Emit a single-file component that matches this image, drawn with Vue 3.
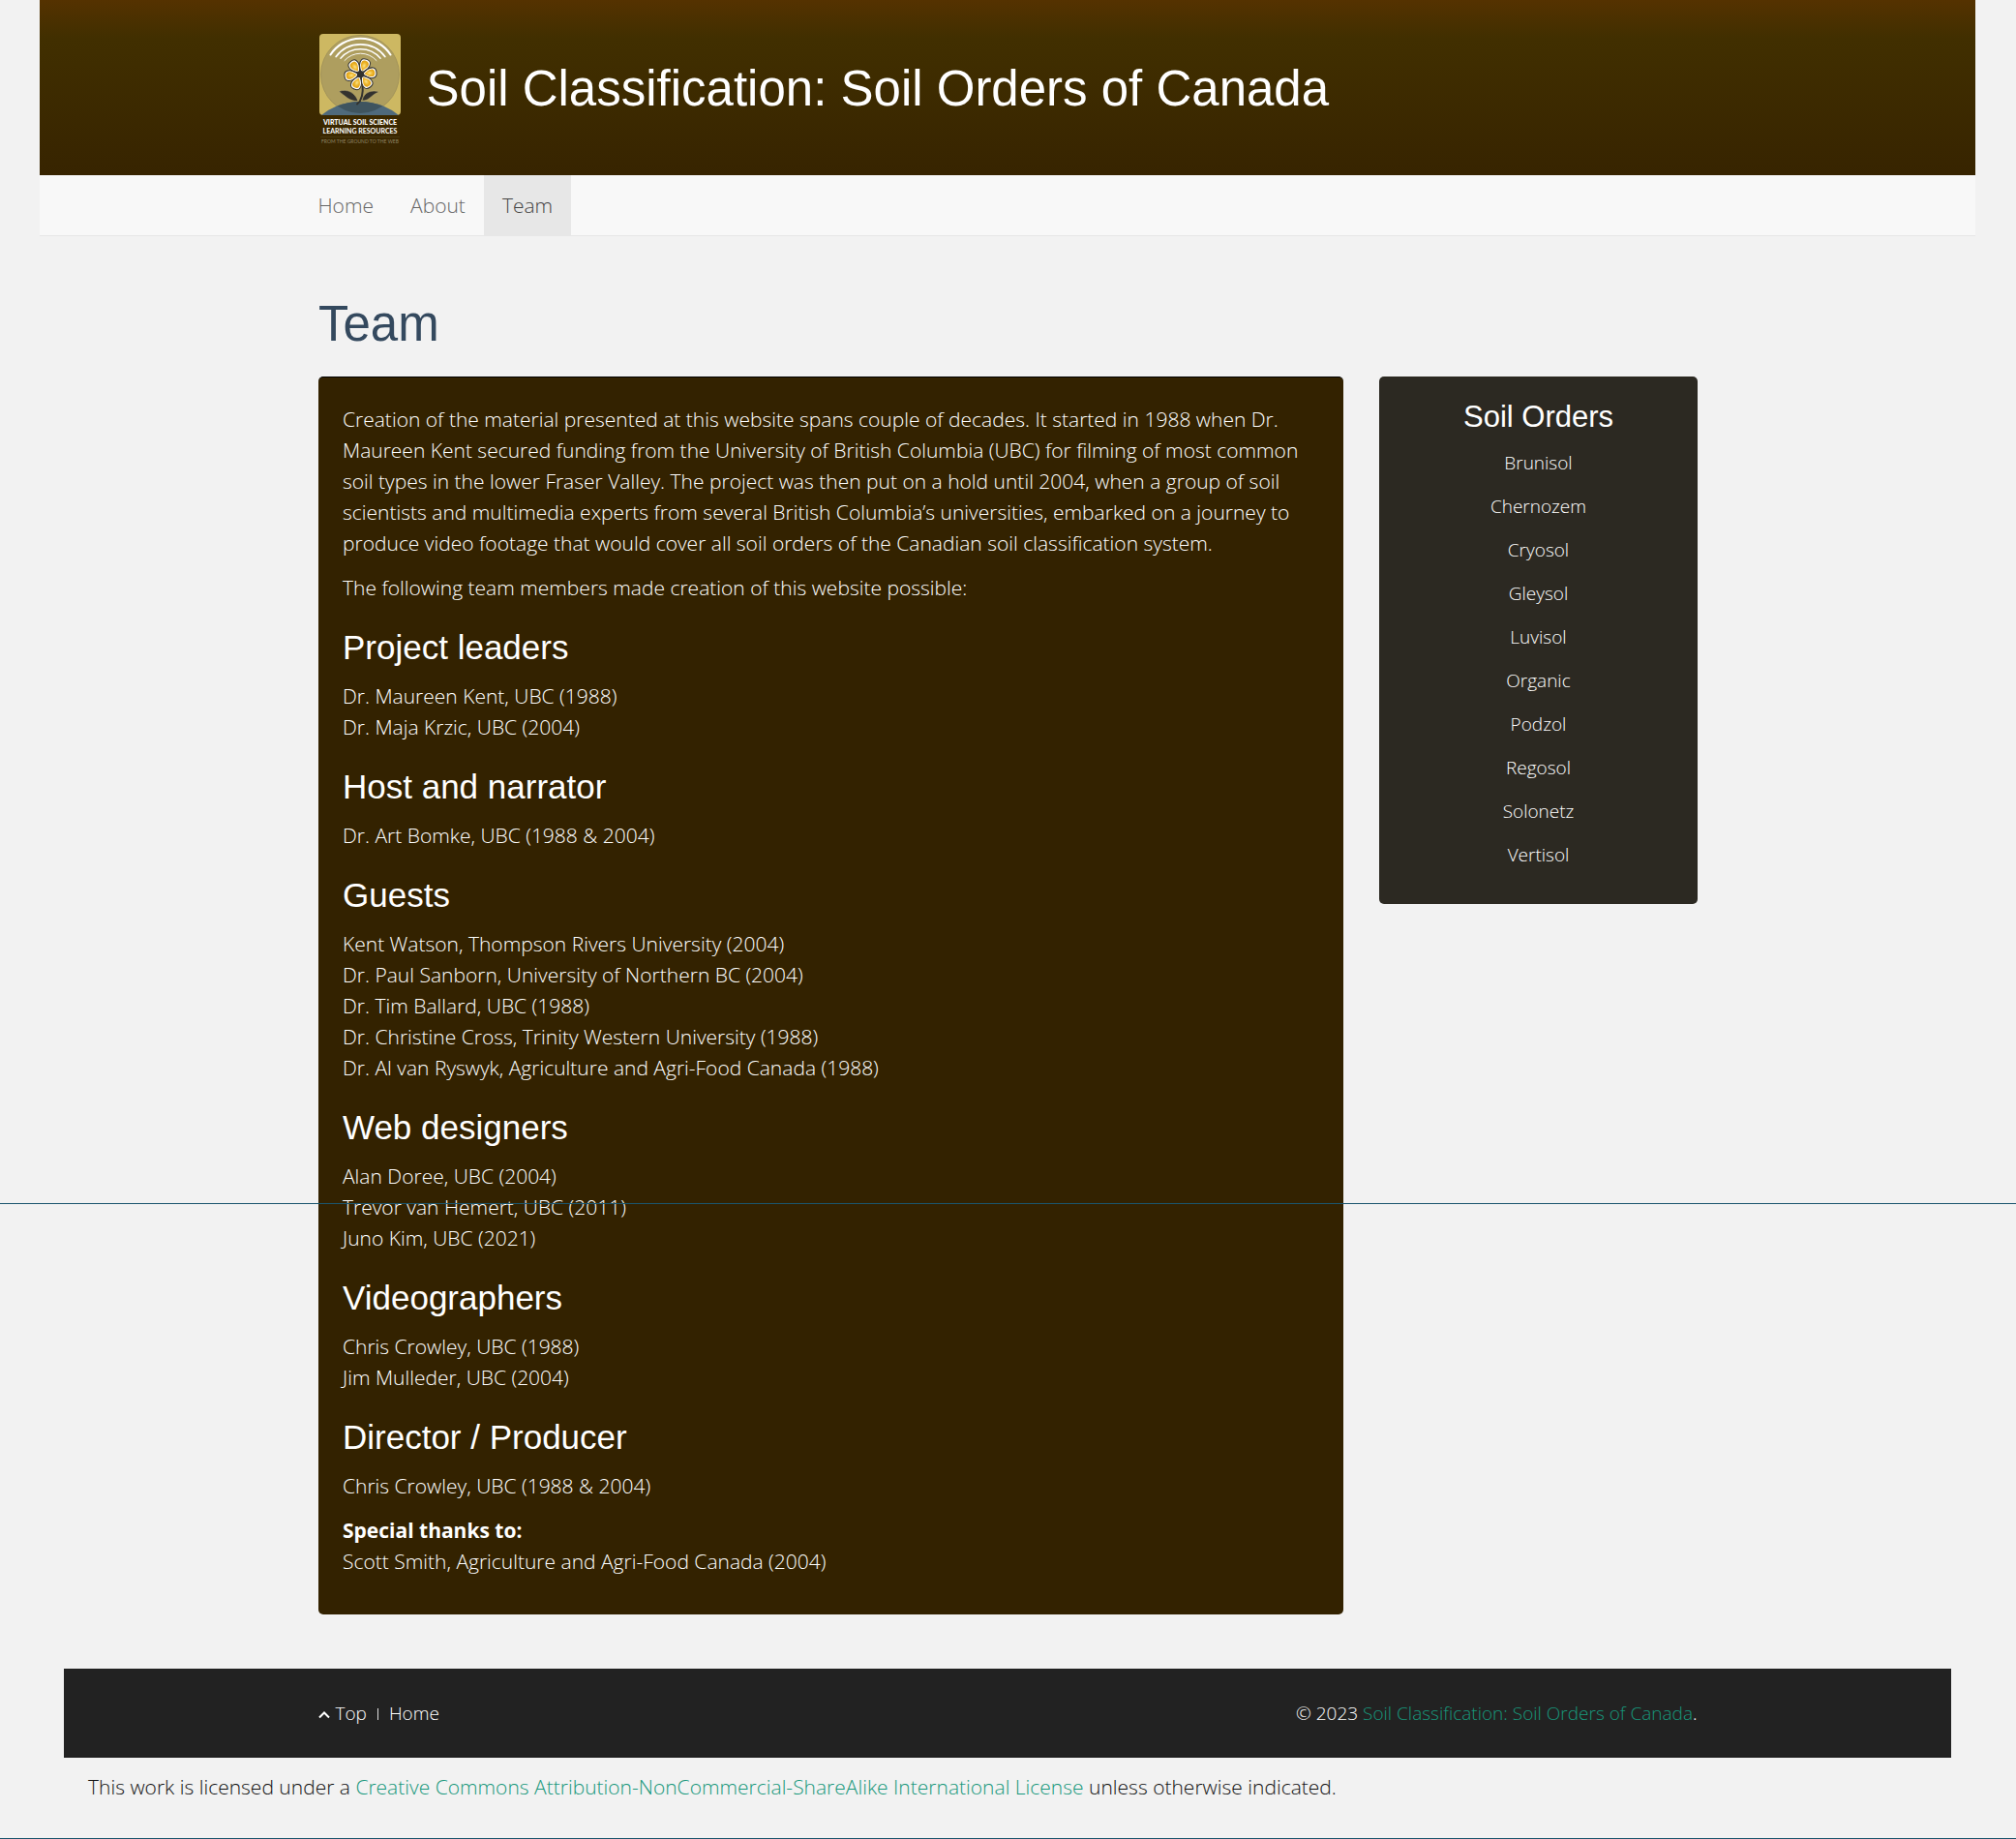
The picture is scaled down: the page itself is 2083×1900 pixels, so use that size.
<script setup>
const nav = [
  { label: 'Home', active: false },
  { label: 'About', active: false },
  { label: 'Team', active: true },
]

const groups = [
  { title: 'Project leaders', people: ['Dr. Maureen Kent, UBC (1988)', 'Dr. Maja Krzic, UBC (2004)'] },
  { title: 'Host and narrator', people: ['Dr. Art Bomke, UBC (1988 & 2004)'] },
  {
    title: 'Guests',
    people: [
      'Kent Watson, Thompson Rivers University (2004)',
      'Dr. Paul Sanborn, University of Northern BC (2004)',
      'Dr. Tim Ballard, UBC (1988)',
      'Dr. Christine Cross, Trinity Western University (1988)',
      'Dr. Al van Ryswyk, Agriculture and Agri-Food Canada (1988)',
    ],
  },
  { title: 'Web designers', people: ['Alan Doree, UBC (2004)', 'Trevor van Hemert, UBC (2011)', 'Juno Kim, UBC (2021)'] },
  { title: 'Videographers', people: ['Chris Crowley, UBC (1988)', 'Jim Mulleder, UBC (2004)'] },
  { title: 'Director / Producer', people: ['Chris Crowley, UBC (1988 & 2004)'] },
]

const orders = ['Brunisol', 'Chernozem', 'Cryosol', 'Gleysol', 'Luvisol', 'Organic', 'Podzol', 'Regosol', 'Solonetz', 'Vertisol']

const petals = [23, 83, 143, 203, 263, 323]
</script>

<template>
  <div id="top" class="page">
    <header class="banner">
      <div class="container brand">
        <svg class="logo" viewBox="0 0 85 114" role="img" aria-label="Virtual Soil Science Learning Resources">
          <defs>
            <radialGradient id="gold" cx="50%" cy="50%" r="60%">
              <stop offset="0" stop-color="#fbe48a" />
              <stop offset="0.5" stop-color="#eeb52a" />
              <stop offset="1" stop-color="#d99a10" />
            </radialGradient>
            <clipPath id="card"><rect x="0" y="0" width="84" height="84" rx="4" /></clipPath>
            <clipPath id="disc"><circle cx="42" cy="42" r="40" /></clipPath>
          </defs>
          <g clip-path="url(#card)">
            <rect width="84" height="84" fill="#cdb862" />
            <circle cx="42" cy="42" r="40.5" fill="#ae9e5f" stroke="#a3945a" stroke-width="1" />
            <circle cx="42" cy="134" r="64" fill="#4f6a7c" />
            <circle cx="42" cy="134" r="64" fill="#3f545f" clip-path="url(#disc)" />
          </g>
          <g fill="none" stroke="#fff" stroke-linecap="round">
            <path d="M11.5 21.5A37 37 0 0 1 73.5 21.5" stroke-width="2.1" />
            <path d="M17.2 23.5A31.7 31.7 0 0 1 67.8 23.5" stroke-width="1.8" />
            <path d="M21.9 25.3A27 27 0 0 1 63.1 25.3" stroke-width="1.4" />
            <path d="M26 27.5A22 22 0 0 1 59 27.5" stroke-width="0.9" />
          </g>
          <path d="M44.6 52C45.4 62 44 69 39 72.5" fill="none" stroke="#33322e" stroke-width="2" stroke-linecap="round" />
          <path d="M20 59.5C29 56 37 61 40 69.5C31 70 27 64 20 59.5Z" fill="#33322e" stroke="#c4b476" stroke-width="0.5" />
          <path d="M62 60C55 57.5 46 59.5 44 69C52 69.5 54 62 62 60Z" fill="#33322e" stroke="#c4b476" stroke-width="0.5" />
          <g transform="translate(42.5 41.7)">
            <g v-for="a in petals" :key="a" :transform="`rotate(${a})`">
              <path d="M0 -2C-3 -5 -6.4 -10 -5 -14C-4 -17.5 4 -17.5 5 -14C6.4 -10 3 -5 0 -2Z" fill="#fff" stroke="#33322e" stroke-width="1" />
              <path d="M0 -4C-2 -6.5 -4.6 -10 -3.6 -13C-2.8 -15.6 2.8 -15.6 3.6 -13C4.6 -10 2 -6.5 0 -4Z" fill="url(#gold)" />
            </g>
            <circle r="3.6" fill="#33322e" />
          </g>
          <text class="mark-title" x="42" y="94" text-anchor="middle">VIRTUAL SOIL SCIENCE</text>
          <text class="mark-sub" x="42" y="103" text-anchor="middle">LEARNING RESOURCES</text>
          <path d="M1 106.5H83" stroke="#55481f" stroke-width="0.5" />
          <text class="mark-tag" x="42" y="113" text-anchor="middle">FROM THE GROUND TO THE WEB</text>
        </svg>
        <h1>Soil Classification: Soil Orders of Canada</h1>
      </div>
    </header>

    <nav class="navbar">
      <ul class="container">
        <li v-for="n in nav" :key="n.label">
          <a href="#" :class="{ active: n.active }">{{ n.label }}</a>
        </li>
      </ul>
    </nav>

    <main class="container">
      <h1 class="page-title">Team</h1>
      <div class="columns">
        <article class="card">
          <p>
            Creation of the material presented at this website spans couple of decades. It started in 1988 when Dr.
            Maureen Kent secured funding from the University of British Columbia (UBC) for filming of most common soil
            types in the lower Fraser Valley. The project was then put on a hold until 2004, when a group of soil
            scientists and multimedia experts from several British Columbia’s universities, embarked on a journey to
            produce video footage that would cover all soil orders of the Canadian soil classification system.
          </p>
          <p>The following team members made creation of this website possible:</p>
          <template v-for="g in groups" :key="g.title">
            <h2>{{ g.title }}</h2>
            <p><template v-for="(p, i) in g.people" :key="p"><br v-if="i" />{{ p }}</template></p>
          </template>
          <p><strong>Special thanks to:</strong><br />Scott Smith, Agriculture and Agri-Food Canada (2004)</p>
        </article>
        <aside class="orders">
          <h3>Soil Orders</h3>
          <ul>
            <li v-for="o in orders" :key="o"><a href="#">{{ o }}</a></li>
          </ul>
        </aside>
      </div>
    </main>

    <footer>
      <div class="footbar">
        <div class="container footrow">
          <div class="footlinks">
            <a href="#top"><svg viewBox="0 0 12 10" class="chevron" aria-hidden="true"><path d="M1 7.5L6 2.5L11 7.5" fill="none" stroke="#fff" stroke-width="2" /></svg>Top</a>
            <span class="divider"></span>
            <a href="#">Home</a>
          </div>
          <div>© 2023 <a class="green" href="#">Soil Classification: Soil Orders of Canada</a>.</div>
        </div>
      </div>
      <p class="license">
        This work is licensed under a
        <a class="green" href="#">Creative Commons Attribution-NonCommercial-ShareAlike International License</a>
        unless otherwise indicated.
      </p>
    </footer>
    <div class="rule"></div>
  </div>
</template>

<style>
body {
  background: #f2f2f2;
}
</style>

<style scoped>
.page {
  position: relative;
  box-sizing: border-box;
  min-height: 100vh;
  border-bottom: 1px solid #1b566e;
  background: #f2f2f2;
  color: #111;
  font: 300 21px/32px "Open Sans", "Noto Sans", sans-serif;
}
.container {
  box-sizing: border-box;
  max-width: 1425px;
  margin: 0 auto;
}
h1, h2, h3 {
  margin: 0;
  font-family: "Liberation Sans", Arial, sans-serif;
  font-weight: 400;
}
strong {
  font-weight: 700;
}
ul {
  margin: 0;
  padding: 0;
  list-style: none;
}
a {
  color: inherit;
  text-decoration: none;
}
.banner {
  margin: 0 42px 0 41px;
  padding: 35px 0 32px;
  background: linear-gradient(#553200, #412f00 40px, #372400);
}
.brand {
  display: flex;
  align-items: center;
  gap: 26px;
}
.brand h1 {
  color: #fff;
  font-size: 51px;
  line-height: 56px;
}
.logo {
  width: 85px;
  height: 114px;
  margin-left: 1px;
}
.mark-title {
  fill: #fff;
  font: 900 7px Lato, sans-serif;
}
.mark-sub {
  fill: #fff;
  font: 700 7px Lato, sans-serif;
}
.mark-tag {
  fill: #8f8464;
  font: 400 5px Lato, sans-serif;
}
.navbar {
  margin: 0 42px 0 41px;
  border-bottom: 1px solid #e7e7e7;
  background: #f8f8f8;
}
.navbar ul {
  display: flex;
}
.navbar li:first-child {
  margin-left: -19px;
}
.navbar a {
  display: block;
  padding: 15px 19px;
  color: #666;
}
.navbar a.active {
  background: #e7e7e7;
  color: #444;
}
.page-title {
  padding: 63px 0 26px;
  color: #34495e;
  font-size: 51px;
  line-height: 56px;
}
.columns {
  display: grid;
  grid-template-columns: 1059fr 329fr;
  align-items: start;
  gap: 37px;
}
.card {
  padding: 27px 25px 25px;
  border-top: 1px solid #000;
  border-radius: 5px;
  background: #332200;
  color: #fff;
}
.card p {
  margin: 0 0 14px;
}
.card h2 {
  margin: 27px 0 15px;
  font-size: 35px;
  line-height: 38px;
}
.orders {
  padding: 25px 25px 37px;
  border-radius: 5px;
  background: #2c2922;
  color: #fff;
  font-size: 19px;
  line-height: 27px;
  text-align: center;
}
.orders h3 {
  margin-bottom: 17px;
  font-size: 31px;
  line-height: 34px;
}
.orders ul {
  display: grid;
  gap: 18px;
}
footer {
  margin: 56px 67px 0 66px;
}
.footbar {
  padding: 31px 0 29px;
  border-bottom: 1px solid #1b1b1b;
  background: #222;
  color: #fff;
  font-size: 19px;
  line-height: 31px;
}
.footrow {
  display: flex;
  justify-content: space-between;
}
.footlinks {
  display: flex;
  align-items: center;
  gap: 11px;
}
.chevron {
  width: 12px;
  height: 10px;
  margin-right: 6px;
}
.divider {
  width: 1px;
  height: 12px;
  background: #ddd;
}
.green {
  color: #18987c;
}
.license {
  margin: 14px 0 0;
  padding: 0 25px 37px;
}
.rule {
  position: absolute;
  top: 1243px;
  right: 0;
  left: 0;
  height: 1px;
  background: #1b566e;
}
</style>
